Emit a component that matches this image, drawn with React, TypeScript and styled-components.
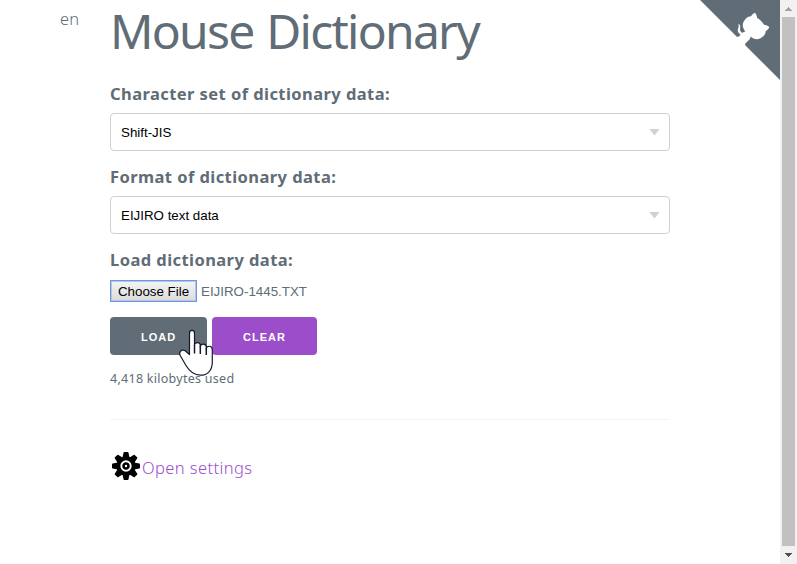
import React from "react";
import styled, { createGlobalStyle } from "styled-components";

const GlobalStyle = createGlobalStyle`
  * { box-sizing: border-box; }
  html, body { margin: 0; padding: 0; overflow: hidden; background: #fff; }
  body { color: #606c76; font-family: "Noto Sans", Verdana, sans-serif; font-size: 16px; font-weight: 300; }
`;

const Window = styled.div`
  display: grid;
  grid-template-columns: 1fr 17px;
  height: 564px;
`;

const Page = styled.div`
  position: relative;
  display: grid;
  grid-template-columns: 50px 560px;
  column-gap: 0;
  padding-left: 60px;
  align-items: start;
`;

const Language = styled.div`
  padding-top: 8px;
  line-height: 22px;
  font-size: 16.5px;
  letter-spacing: 0.2px;
`;

const Main = styled.main`
  display: flex;
  flex-direction: column;
`;

const Title = styled.h1`
  margin: -2px 0 0;
  height: 85px;
  line-height: 66px;
  font-size: 48px;
  font-weight: 400;
  letter-spacing: -1.75px;
  word-spacing: 2px;
  white-space: nowrap;
`;

const Label = styled.label`
  height: 30px;
  line-height: 22px;
  font-size: 16.5px;
  font-weight: 700;
  white-space: nowrap;
  letter-spacing: 0.43px;
`;

const Select = styled.div`
  display: flex;
  align-items: center;
  justify-content: space-between;
  height: 38px;
  margin-bottom: 15px;
  padding: 0 10px;
  border: 1px solid #d1d1d1;
  border-radius: 4px;
  color: #000;
  font: 13.333px/38px "Liberation Sans", Arial, sans-serif;
`;

const SelectValue = styled.span`
  padding-top: 1px;
`;

const Arrow = styled.span`
  width: 11px;
  height: 7px;
  margin-right: -1px;
  background: #d1d1d1;
  clip-path: polygon(0 0, 100% 0, 50% 100%);
`;

const FileRow = styled.div`
  display: flex;
  align-items: center;
  gap: 4px;
  height: 22px;
  margin: 1px 0 15px;
  font: 13.333px/20px "Liberation Sans", Arial, sans-serif;
`;

const FileName = styled.span`
  padding-top: 1px;
`;

const FileButton = styled.button`
  width: 87px;
  height: 22px;
  padding: 1px 0 0;
  border: 1px solid #6f97db;
  box-shadow: inset 0 0 0 1px #b4c6e6;
  background: linear-gradient(#f4f4f4, #dcdcdc);
  color: #000;
  font: inherit;
  line-height: 19px;
  white-space: nowrap;
`;

const Actions = styled.div`
  display: flex;
  gap: 5px;
  height: 38px;
`;

const Action = styled.button<{ $width: number; $color: string }>`
  width: ${(p) => p.$width}px;
  height: 38px;
  padding: 2px 0 0;
  border: 0;
  border-radius: 4px;
  background: ${(p) => p.$color};
  color: #fff;
  font: 700 11px/36px "Liberation Sans", Arial, sans-serif;
  letter-spacing: 1px;
`;

const Usage = styled.div`
  height: 64px;
  padding-top: 14px;
  font-size: 12.5px;
  font-weight: 400;
  letter-spacing: 0.27px;
  line-height: 20px;
  white-space: nowrap;
`;

const Divider = styled.hr`
  width: 100%;
  margin: 0;
  border: 0;
  border-top: 1px solid #f4f5f6;
`;

const SettingsLink = styled.a`
  display: flex;
  align-items: center;
  height: 28px;
  margin: 32px 0 0 2px;
  gap: 2px;
  color: #9b4dca;
  font-size: 16.5px;
  letter-spacing: 0.4px;
  line-height: 28px;
  white-space: nowrap;
`;

const LinkText = styled.span`
  padding-top: 4px;
`;

const Corner = styled.svg`
  position: absolute;
  top: 0;
  right: 0;
`;

const Cursor = styled.svg`
  position: absolute;
  left: 178px;
  top: 328px;
`;

const Scrollbar = styled.div`
  display: flex;
  flex-direction: column;
  align-items: center;
  background: #f1f1f1;
`;

const Thumb = styled.div`
  width: 13px;
  height: 529px;
  background: #c1c1c1;
`;

function GearIcon() {
  return (
    <svg width="28" height="28" viewBox="-14 -14 28 28">
      {[0, 45, 90, 135, 180, 225, 270, 315].map((a) => (
        <path key={a} transform={`rotate(${a})`} d="M-3.6-8 -2.5-13.2Q-2.3-14-1.7-14H1.7Q2.3-14 2.5-13.2L3.6-8Z" />
      ))}
      <circle r="9.6" />
      <circle r="4.7" fill="none" stroke="#fff" strokeWidth="1.9" />
      <circle r="1.2" fill="#fff" />
    </svg>
  );
}

function GithubCorner() {
  return (
    <Corner width="80" height="80" viewBox="0 0 250 250">
      <path fill="#606c76" d="M0 0 115 115H130L142 142 250 250V0Z" />
      <path
        fill="#fff"
        d="M128.3 109C113.8 99.7 119 89.6 119 89.6C122 82.7 120.5 78.6 120.5 78.6C119.2 72 123.4 76.3 123.4 76.3C127.3 80.9 125.5 87.3 125.5 87.3C122.9 97.6 130.6 101.9 134.4 103.2"
      />
      <path
        fill="#fff"
        d="M115 115C114.9 115.1 118.7 116.5 119.8 115.4L133.7 101.6C136.9 99.2 139.9 98.4 142.2 98.6C133.8 88 127.5 74.4 143.8 58C148.5 53.4 154 51.2 159.7 51C160.3 49.4 163.2 43.6 171.4 40.1C171.4 40.1 176.1 42.5 178.8 56.2C183.1 58.6 187.2 61.8 190.9 65.4C194.5 69 197.7 73.2 200.1 77.6C213.8 80.2 216.3 84.9 216.3 84.9C212.7 93.1 206.9 96 205.4 96.6C205.1 102.4 203 107.8 198.3 112.5C181.9 128.9 168.3 122.5 157.7 114.1C157.9 116.9 156.7 120.9 152.7 124.9L141 136.5C139.8 137.7 141.6 141.9 141.8 141.8Z"
      />
    </Corner>
  );
}

function HandCursor() {
  return (
    <Cursor width="38" height="50" viewBox="0 0 38 50">
      <path
        d="M11.5 25V5C11.5 1.6 16.5 1.6 16.5 5V17.5C16.5 13.6 22.3 13.9 22.3 17.5V19C22.3 14.8 28.3 15.5 28.3 19V21C28.3 17 34.3 17.5 34.3 21.5V34C34.3 42.5 29.5 47.2 22.5 47.2C15 47.2 11 42.5 8 37.5L2.2 27.5C.4 23.8 3.5 21 6.8 22.5L11.5 26.5Z"
        fill="#fff"
        stroke="#15192b"
        strokeWidth="1.2"
        strokeLinejoin="round"
      />
      <path d="M16.5 17V25.5M22.3 18V26M28.3 20V27" fill="none" stroke="#15192b" strokeWidth="1.5" />
    </Cursor>
  );
}

export default function App() {
  return (
    <>
      <GlobalStyle />
      <Window>
        <Page>
          <Language>en</Language>
          <Main>
            <Title>Mouse Dictionary</Title>
            <Label>Character set of dictionary data:</Label>
            <Select><SelectValue>Shift-JIS</SelectValue><Arrow /></Select>
            <Label>Format of dictionary data:</Label>
            <Select><SelectValue>EIJIRO text data</SelectValue><Arrow /></Select>
            <Label>Load dictionary data:</Label>
            <FileRow>
              <FileButton>Choose File</FileButton>
              <FileName>EIJIRO-1445.TXT</FileName>
            </FileRow>
            <Actions>
              <Action $width={97} $color="#606c76">LOAD</Action>
              <Action $width={105} $color="#9b4dca">CLEAR</Action>
            </Actions>
            <Usage>4,418 kilobytes used</Usage>
            <Divider />
            <SettingsLink>
              <GearIcon />
              <LinkText>Open settings</LinkText>
            </SettingsLink>
          </Main>
          <GithubCorner />
          <HandCursor />
        </Page>
        <Scrollbar>
          <svg width="17" height="17" shapeRendering="crispEdges"><path d="M5 11h7L8.5 7Z" fill="#a3a3a3" /></svg>
          <Thumb />
          <svg width="17" height="17" shapeRendering="crispEdges"><path d="M5 7h7L8.5 11Z" fill="#505050" /></svg>
        </Scrollbar>
      </Window>
    </>
  );
}
